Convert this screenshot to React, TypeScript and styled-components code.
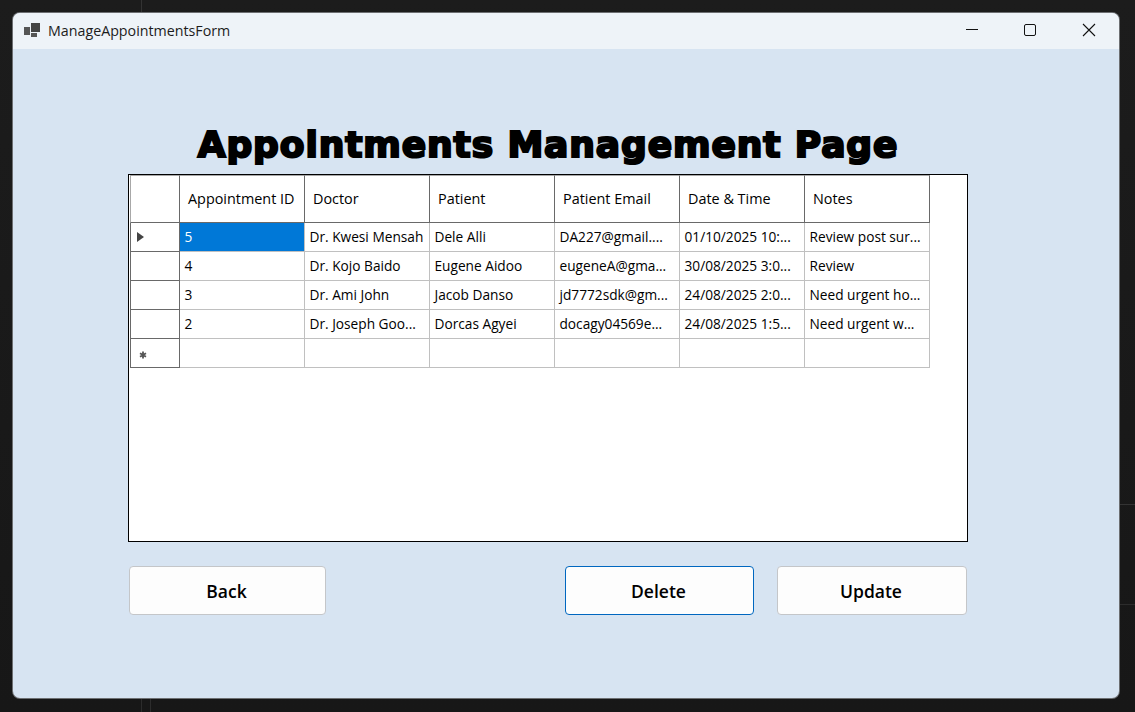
import styled, { createGlobalStyle } from "styled-components";

const columns = ["Appointment ID", "Doctor", "Patient", "Patient Email", "Date & Time", "Notes"];

const rows = [
  ["5", "Dr. Kwesi Mensah", "Dele Alli", "DA227@gmail....", "01/10/2025 10:...", "Review post sur..."],
  ["4", "Dr. Kojo Baido", "Eugene Aidoo", "eugeneA@gma...", "30/08/2025 3:0...", "Review"],
  ["3", "Dr. Ami John", "Jacob Danso", "jd7772sdk@gm...", "24/08/2025 2:0...", "Need urgent ho..."],
  ["2", "Dr. Joseph Goo...", "Dorcas Agyei", "docagy04569e...", "24/08/2025 1:5...", "Need urgent w..."],
  ["", "", "", "", "", ""],
];

const App = () => {
  return (
    <>
      <GlobalStyle />
      <Desktop>
        <Window>
          <TitleBar>
            <AppIcon viewBox="0 0 16 16">
              <rect x="0" y="5" width="6" height="8" fill="#555" />
              <rect x="7" y="1" width="9" height="9" fill="#444" />
              <rect x="7" y="11" width="6" height="4" fill="#555" />
            </AppIcon>
            <WindowTitle>ManageAppointmentsForm</WindowTitle>
            <Controls>
              <ControlButton>
                <svg width="14" height="14" viewBox="0 0 14 14">
                  <path d="M2 6.5H14" stroke="#111" strokeWidth="1" fill="none" />
                </svg>
              </ControlButton>
              <ControlButton>
                <svg width="14" height="14" viewBox="0 0 14 14">
                  <rect x="1.5" y="1.5" width="11" height="11" rx="1.5" stroke="#111" strokeWidth="1" fill="none" />
                </svg>
              </ControlButton>
              <ControlButton>
                <svg width="14" height="14" viewBox="0 0 14 14">
                  <path d="M1 1L13 13M13 1L1 13" stroke="#111" strokeWidth="1.1" fill="none" />
                </svg>
              </ControlButton>
            </Controls>
          </TitleBar>
          <Body>
            <Heading>Appointments Management Page</Heading>
            <GridBox>
              <DataGrid>
                <thead>
                  <tr>
                    <CornerCell />
                    {columns.map((name) => (
                      <HeaderCell key={name}>{name}</HeaderCell>
                    ))}
                  </tr>
                </thead>
                <tbody>
                  {rows.map((row, index) => (
                    <tr key={index}>
                      <RowHeader>
                        {index === 0 && <CurrentArrow />}
                        {index === rows.length - 1 && (
                          <NewRowMark viewBox="0 0 8 8">
                            <path d="M4 0.5V7.5M1 2.2L7 5.8M7 2.2L1 5.8" stroke="#555" strokeWidth="1.8" fill="none" />
                          </NewRowMark>
                        )}
                      </RowHeader>
                      {row.map((value, col) => (
                        <DataCell key={col} $selected={index === 0 && col === 0}>
                          {value}
                        </DataCell>
                      ))}
                    </tr>
                  ))}
                </tbody>
              </DataGrid>
            </GridBox>
            <ButtonRow>
              <ActionButton $width={197}>Back</ActionButton>
              <RightButtons>
                <ActionButton $width={189} $focused>Delete</ActionButton>
                <ActionButton $width={190}>Update</ActionButton>
              </RightButtons>
            </ButtonRow>
          </Body>
        </Window>
      </Desktop>
    </>
  );
};

export default App;

const GlobalStyle = createGlobalStyle`
  html, body {
    margin: 0;
    height: 100%;
    background: #1a1a1a;
  }
  body {
    font-family: "Open Sans", "Noto Sans", sans-serif;
  }
`;

// faint edges of whatever sits behind the window
const Desktop = styled.div`
  width: 1135px;
  height: 712px;
  padding: 13px 16px 14px 13px;
  box-sizing: border-box;
  overflow: hidden;
  background:
    linear-gradient(#333, #333) 141px 0 / 1px 12px no-repeat,
    linear-gradient(#2c2c2c, #2c2c2c) 141px 698px / 1px 14px no-repeat,
    linear-gradient(#2c2c2c, #2c2c2c) 150px 698px / 1px 14px no-repeat,
    linear-gradient(#333, #333) 1120px 504px / 15px 1px no-repeat,
    linear-gradient(#2c2c2c, #2c2c2c) 1120px 604px / 15px 1px no-repeat,
    linear-gradient(#1c1c1c, #171717);
`;

const Window = styled.div`
  width: 1106px;
  height: 685px;
  display: flex;
  flex-direction: column;
  border-radius: 7px;
  overflow: hidden;
  background: #d7e4f2;
  box-shadow: 0 0 0 1px #6d6f72;
`;

const TitleBar = styled.div`
  height: 36px;
  flex: none;
  box-sizing: border-box;
  display: flex;
  align-items: center;
  padding: 0 0 2px 11px;
  background: #eef3f8;
`;

const AppIcon = styled.svg`
  width: 16px;
  height: 16px;
  margin-right: 8px;
`;

const WindowTitle = styled.div`
  font-size: 14.25px;
  color: #1c1c1c;
`;

const Controls = styled.div`
  margin-left: auto;
  margin-right: 1px;
  display: flex;
`;

const ControlButton = styled.div`
  width: 59px;
  height: 34px;
  display: flex;
  align-items: center;
  justify-content: center;
`;

const Body = styled.div`
  flex: 1;
  display: flex;
  flex-direction: column;
  align-items: flex-start;
  padding: 0 0 0 115px;
`;

const Heading = styled.h1`
  width: 840px;
  margin: 72px 0 0;
  height: 53px;
  line-height: 48px;
  text-align: center;
  font-family: "DejaVu Sans", sans-serif;
  font-size: 36px;
  font-weight: 700;
  letter-spacing: 0.9px;
  color: #000;
  -webkit-text-stroke: 2.2px #000;
  white-space: nowrap;
`;

const GridBox = styled.div`
  width: 840px;
  height: 368px;
  box-sizing: border-box;
  border: 1px solid #000;
  padding: 0 0 0 1px;
  background: #fff;
`;

const DataGrid = styled.table`
  border-collapse: separate;
  border-spacing: 0;
  table-layout: fixed;
  width: 800px;
  font-size: 13.7px;
  color: #000;
`;

const CornerCell = styled.th`
  width: 50px;
  height: 48px;
  padding: 0;
  box-sizing: border-box;
  border-top: 1px solid #a8a8a8;
  border-left: 1px solid #a8a8a8;
  border-right: 1px solid #696969;
  border-bottom: 1px solid #696969;
`;

const HeaderCell = styled.th`
  width: 125px;
  height: 48px;
  padding: 0 0 1px 8px;
  box-sizing: border-box;
  border-top: 1px solid #a8a8a8;
  border-right: 1px solid #696969;
  border-bottom: 1px solid #696969;
  font-size: 14.4px;
  text-align: left;
  font-weight: 400;
  white-space: nowrap;
  overflow: hidden;
`;

const RowHeader = styled.td`
  position: relative;
  height: 29px;
  padding: 0;
  box-sizing: border-box;
  border-left: 1px solid #696969;
  border-right: 1px solid #696969;
  border-bottom: 1px solid #696969;
`;

const CurrentArrow = styled.span`
  position: absolute;
  left: 6px;
  top: 9px;
  border-left: 7px solid #444;
  border-top: 5.5px solid transparent;
  border-bottom: 5.5px solid transparent;
`;

const NewRowMark = styled.svg`
  position: absolute;
  left: 8px;
  top: 12px;
  width: 8px;
  height: 8px;
`;

const DataCell = styled.td<{ $selected?: boolean }>`
  height: 29px;
  padding: 0 0 2px 4.5px;
  box-sizing: border-box;
  border-right: 1px solid #c0c0c0;
  border-bottom: 1px solid #c0c0c0;
  white-space: nowrap;
  overflow: hidden;
  background: ${(p) => (p.$selected ? "#0078d7" : "#fff")};
  color: ${(p) => (p.$selected ? "#fff" : "#000")};
`;

const ButtonRow = styled.div`
  width: 838px;
  margin: 24px 0 0 1px;
  display: flex;
  justify-content: space-between;
`;

const RightButtons = styled.div`
  display: flex;
  gap: 23px;
`;

const ActionButton = styled.button<{ $width: number; $focused?: boolean }>`
  width: ${(p) => p.$width}px;
  height: 49px;
  box-sizing: border-box;
  padding: 0 2px 0 0;
  border: 1px solid ${(p) => (p.$focused ? "#0067c0" : "#c4c6c9")};
  border-radius: 4px;
  background: #fdfdfd;
  font-family: "Open Sans", "Noto Sans", sans-serif;
  font-size: 17.5px;
  font-weight: 600;
  color: #000;
`;
